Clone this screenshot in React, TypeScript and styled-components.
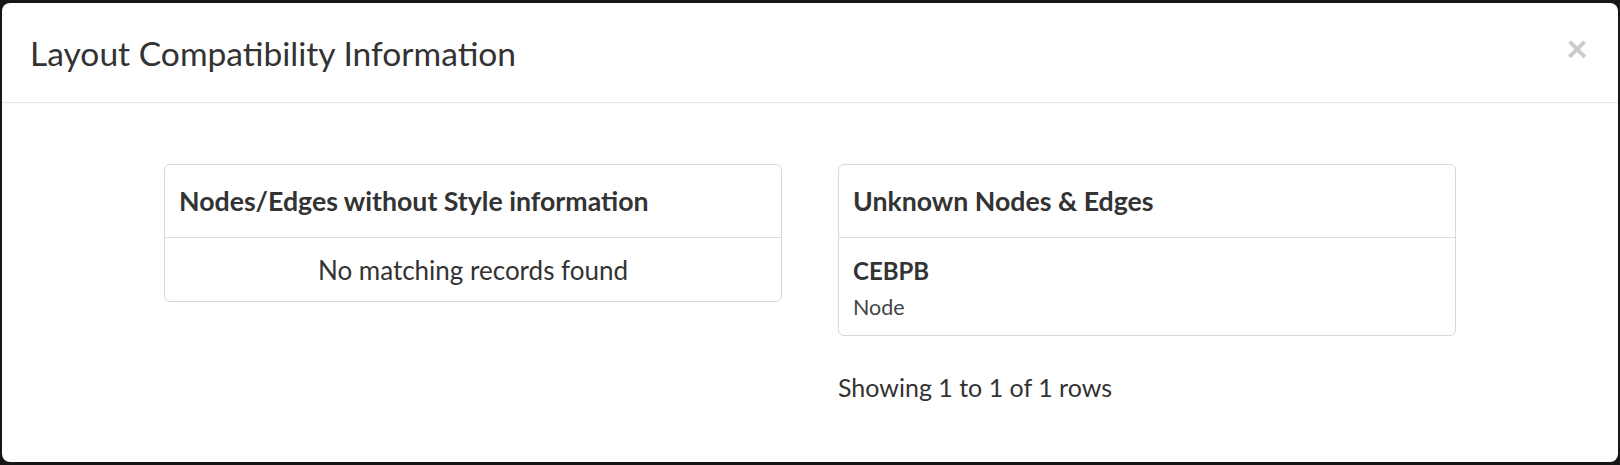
import * as React from 'react';
import styled, { createGlobalStyle } from 'styled-components';

const GlobalStyle = createGlobalStyle`
  html, body {
    margin: 0;
    padding: 0;
    background: #161616;
    height: 465px;
    overflow: hidden;
  }
  * {
    box-sizing: border-box;
  }
`;

type Row = { name: string; kind: string };

const unknownRows: Row[] = [{ name: 'CEBPB', kind: 'Node' }];

export default function App() {
  return (
    <>
      <GlobalStyle />
      <Backdrop>
        <Modal>
          <Header>
            <Title>Layout Compatibility Information</Title>
            <CloseButton aria-label="Close">×</CloseButton>
          </Header>
          <Body>
            <Column>
              <Card>
                <CardHeader>Nodes/Edges without Style information</CardHeader>
                <EmptyRow>No matching records found</EmptyRow>
              </Card>
            </Column>
            <Column>
              <Card>
                <CardHeader>Unknown Nodes &amp; Edges</CardHeader>
                {unknownRows.map((row) => (
                  <ItemRow key={row.name}>
                    <ItemName>{row.name}</ItemName>
                    <ItemKind>{row.kind}</ItemKind>
                  </ItemRow>
                ))}
              </Card>
              <Pagination>
                Showing 1 to {unknownRows.length} of {unknownRows.length} rows
              </Pagination>
            </Column>
          </Body>
        </Modal>
      </Backdrop>
    </>
  );
}

const Backdrop = styled.div`
  padding: 3px 2px 0 2px;
  height: 465px;
  font-family: Lato, 'Open Sans', sans-serif;
  color: #333;
`;

const Modal = styled.div`
  width: 1616px;
  height: 459px;
  background: #fff;
  border-radius: 8px;
  overflow: hidden;
`;

const Header = styled.div`
  display: flex;
  align-items: center;
  height: 100px;
  padding: 2px 30px 0 28px;
  border-bottom: 1px solid #e5e5e5;
`;

const Title = styled.h4`
  margin: 0;
  font-size: 33.6px;
  line-height: 1;
  font-weight: 400;
  color: #333;
`;

const CloseButton = styled.button`
  margin-left: auto;
  margin-bottom: 14px;
  padding: 0;
  border: 0;
  background: transparent;
  font-family: Lato, sans-serif;
  font-size: 38px;
  line-height: 1;
  font-weight: 900;
  color: #000;
  opacity: 0.2;
  cursor: pointer;
`;

const Body = styled.div`
  display: flex;
  justify-content: center;
  align-items: flex-start;
  gap: 56px;
  padding-top: 61px;
`;

const Column = styled.div`
  width: 618px;
`;

const Card = styled.div`
  border: 1px solid #d8d8d8;
  border-radius: 6px;
`;

const CardHeader = styled.div`
  display: flex;
  align-items: center;
  height: 73px;
  padding: 0 14px;
  border-bottom: 1px solid #ddd;
  font-size: 26.7px;
  line-height: 1;
  font-weight: 700;
`;

const EmptyRow = styled.div`
  display: flex;
  align-items: center;
  justify-content: center;
  height: 63px;
  font-size: 26px;
  line-height: 1;
`;

const ItemRow = styled.div`
  padding: 17px 14px 14px;
`;

const ItemName = styled.div`
  font-size: 24px;
  line-height: 32px;
  font-weight: 700;
`;

const ItemKind = styled.div`
  margin-top: 6px;
  font-size: 21.5px;
  line-height: 28px;
  color: #444;
`;

const Pagination = styled.div`
  margin-top: 34px;
  font-size: 25px;
  line-height: 34px;
`;
